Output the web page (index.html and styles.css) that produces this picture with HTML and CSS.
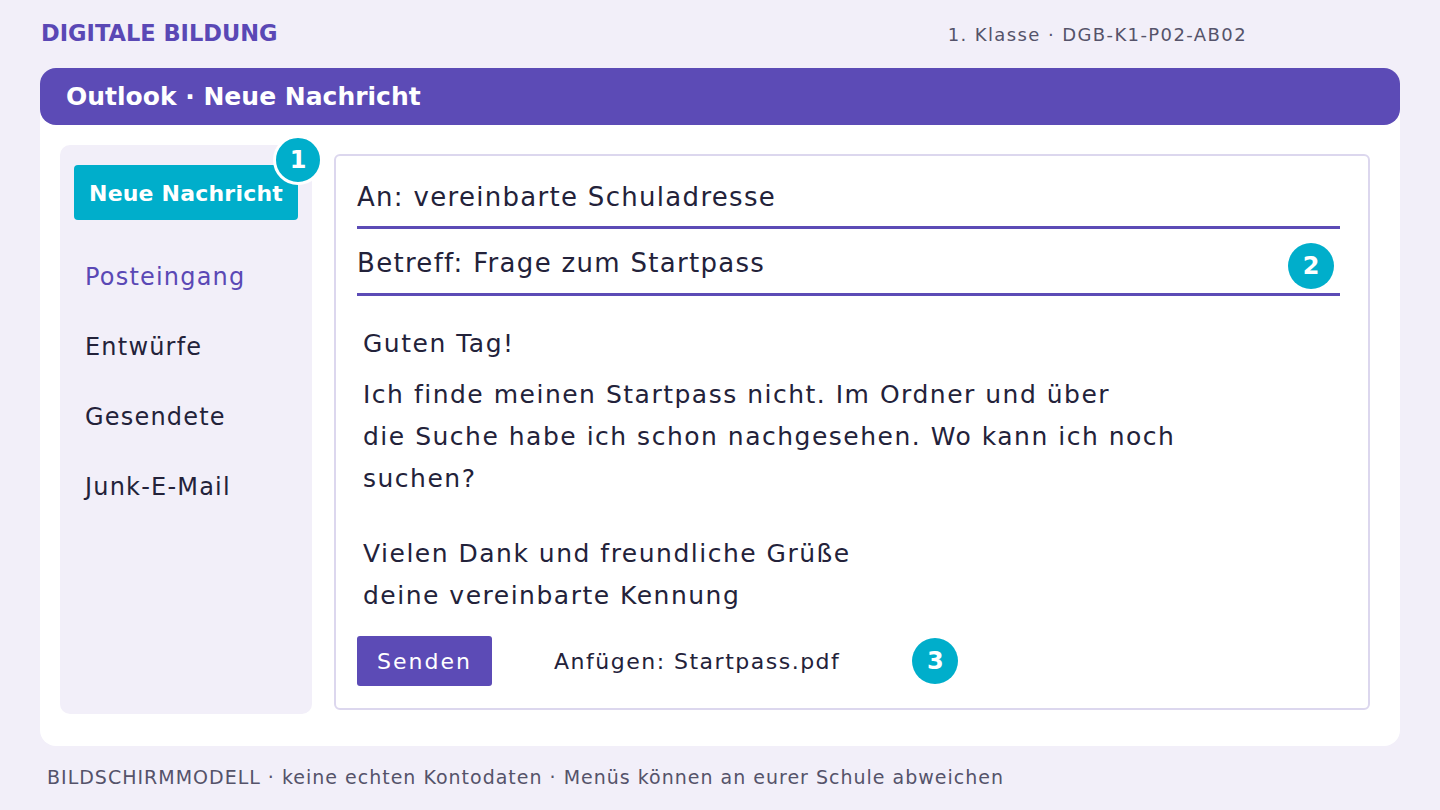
FILE: index.html
```html
<!DOCTYPE html>
<html lang="de">

<head>
    <meta charset="UTF-8">
    <title>Outlook · Neue Nachricht</title>
    <link rel="stylesheet" href="styles.css">
</head>

<body>
    <header class="top">
        <div class="brand">DIGITALE BILDUNG</div>
        <div class="meta">1. Klasse · DGB-K1-P02-AB02</div>
    </header>

    <main class="window">
        <div class="titlebar">Outlook · Neue Nachricht</div>

        <div class="window-body">
            <nav class="sidebar">
                <div class="new-wrap">
                    <div class="new-btn">Neue Nachricht</div>
                    <span class="badge badge-1">1</span>
                </div>
                <div class="nav-item active">Posteingang</div>
                <div class="nav-item">Entwürfe</div>
                <div class="nav-item">Gesendete</div>
                <div class="nav-item">Junk-E-Mail</div>
            </nav>

            <section class="compose">
                <div class="field field-to">An: vereinbarte Schuladresse</div>
                <div class="field">
                    Betreff: Frage zum Startpass
                    <span class="badge badge-2">2</span>
                </div>

                <div class="message">
                    <p>Guten Tag!</p>
                    <p>Ich finde meinen Startpass nicht. Im Ordner und über<br>
                        die Suche habe ich schon nachgesehen. Wo kann ich noch<br>
                        suchen?</p>
                    <p class="closing">Vielen Dank und freundliche Grüße<br>
                        deine vereinbarte Kennung</p>
                </div>

                <div class="actions">
                    <button class="send">Senden</button>
                    <span class="attach">Anfügen: Startpass.pdf</span>
                    <span class="badge">3</span>
                </div>
            </section>
        </div>
    </main>

    <footer class="note">BILDSCHIRMMODELL · keine echten Kontodaten · Menüs können an eurer Schule abweichen</footer>
</body>

</html>
```

FILE: styles.css
```css
body {
    margin: 0;
    padding: 0 40px;
    background-color: #f2eff9;
    font-family: "DejaVu Sans", "Open Sans", sans-serif;
    color: #23223a;
}

.top {
    display: flex;
    justify-content: space-between;
    align-items: center;
    height: 68px;
    padding-left: 1px;
}

.brand {
    font-size: 22.5px;
    font-weight: 700;
    color: #5a48b5;
    margin-top: -2px;
}

.meta {
    font-size: 18px;
    letter-spacing: 1.4px;
    color: #55536a;
    margin-right: 153px;
}

.window {
    background-color: #fff;
    border-radius: 16px;
    height: 678px;
}

.titlebar {
    background-color: #5c4bb6;
    color: #fff;
    font-size: 25px;
    font-weight: 700;
    height: 57px;
    line-height: 58px;
    padding-left: 26px;
    border-radius: 16px;
}

.window-body {
    display: flex;
    gap: 22px;
    padding: 20px 30px 0 20px;
}

.sidebar {
    width: 252px;
    height: 569px;
    flex-shrink: 0;
    box-sizing: border-box;
    background-color: #f2eff9;
    border-radius: 10px;
    padding: 20px 14px;
}

.new-wrap {
    position: relative;
    margin-bottom: 22px;
}

.new-btn {
    width: 224px;
    height: 55px;
    line-height: 57px;
    text-align: center;
    white-space: nowrap;
    background-color: #00aecb;
    color: #fff;
    font-size: 22px;
    font-weight: 700;
    letter-spacing: 0.2px;
    border-radius: 4px;
}

.nav-item {
    font-size: 24px;
    letter-spacing: 1.2px;
    height: 70px;
    line-height: 70px;
    padding-left: 11px;
}

.nav-item.active {
    color: #5a48b5;
}

.badge {
    display: inline-flex;
    align-items: center;
    justify-content: center;
    flex-shrink: 0;
    width: 46px;
    height: 46px;
    border-radius: 50%;
    background-color: #00aecb;
    color: #fff;
    font-size: 24px;
    font-weight: 700;
    letter-spacing: 0;
}

.badge-1 {
    position: absolute;
    left: 199px;
    top: -30px;
    border: 3px solid #fff;
    box-sizing: border-box;
    width: 50px;
    height: 50px;
}

.compose {
    position: relative;
    margin-top: 9px;
    width: 1036px;
    height: 556px;
    box-sizing: border-box;
    border: 2px solid #dcd7ee;
    border-radius: 6px;
    padding: 10px 28px 0 21px;
}

.field {
    position: relative;
    font-size: 26px;
    letter-spacing: 1.3px;
    height: 60px;
    line-height: 60px;
    border-bottom: 3px solid #5c4bb6;
    margin-bottom: 4px;
}

.field-to {
    line-height: 62px;
}

.badge-2 {
    position: absolute;
    right: 6px;
    top: 10px;
}

.message {
    padding: 23px 0 0 6px;
    font-size: 25px;
    letter-spacing: 1.5px;
    line-height: 42px;
}

.message p {
    margin: 0 0 9px;
}

.message .closing {
    margin-top: 33px;
}

.actions {
    display: flex;
    align-items: center;
    margin-top: 19px;
}

.send {
    background-color: #5c4bb6;
    color: #fff;
    border: none;
    border-radius: 3px;
    font-family: inherit;
    font-size: 22px;
    letter-spacing: 2px;
    width: 135px;
    height: 50px;
    margin-right: 62px;
}

.attach {
    font-size: 22px;
    letter-spacing: 1.5px;
    margin-right: 72px;
}

.note {
    font-size: 19px;
    letter-spacing: 1px;
    color: #55536a;
    padding: 20px 0 0 7px;
}
```
